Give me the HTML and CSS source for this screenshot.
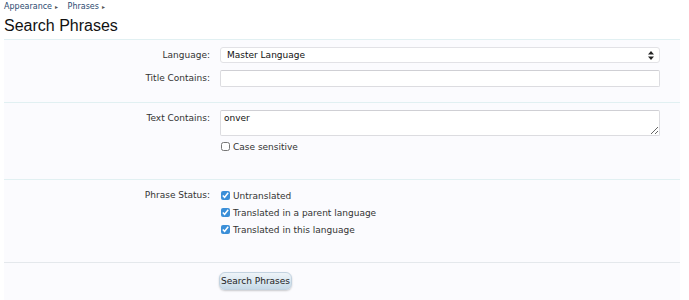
FILE: index.html
```html
<!DOCTYPE html>
<html lang="en">
<head>
  <meta charset="UTF-8">
  <title>Search Phrases</title>
  <link rel="stylesheet" href="styles.css">
</head>
<body>
  <div class="crumbs">
    <a href="#">Appearance</a><span class="arrow">&#9656;</span>
    <a href="#">Phrases</a><span class="arrow">&#9656;</span>
  </div>
  <h1>Search Phrases</h1>

  <form class="form">
    <fieldset class="section first">
      <div class="row">
        <label class="label">Language:</label>
        <div class="ctrl">
          <div class="select">
            <span>Master Language</span>
            <svg width="6" height="9" viewBox="0 0 6 9"><path d="M3 0 L6 3.5 H0 Z M3 9 L0 5.5 H6 Z" fill="#222"/></svg>
          </div>
        </div>
      </div>
      <div class="row">
        <label class="label">Title Contains:</label>
        <div class="ctrl"><input class="text" type="text"></div>
      </div>
    </fieldset>

    <fieldset class="section second">
      <div class="row">
        <label class="label">Text Contains:</label>
        <div class="ctrl">
          <textarea class="text area">onver</textarea>
          <label class="check"><input type="checkbox"> Case sensitive</label>
        </div>
      </div>
    </fieldset>

    <fieldset class="section third">
      <div class="row">
        <label class="label">Phrase Status:</label>
        <div class="ctrl">
          <label class="check"><input type="checkbox" checked> Untranslated</label>
          <label class="check"><input type="checkbox" checked> Translated in a parent language</label>
          <label class="check"><input type="checkbox" checked> Translated in this language</label>
        </div>
      </div>
    </fieldset>

    <fieldset class="section last">
      <div class="row">
        <div class="label"></div>
        <div class="ctrl"><button type="button" class="button">Search Phrases</button></div>
      </div>
    </fieldset>
  </form>
</body>
</html>
```

FILE: styles.css
```css
* {
  margin: 0;
  padding: 0;
  box-sizing: border-box;
}

body {
  background: #fff;
  font-family: "DejaVu Sans", Verdana, sans-serif;
  font-size: 9px;
  color: #222;
  padding: 0 4px;
}

.crumbs {
  height: 14px;
  padding-top: 2px;
  font-size: 8px;
  color: #2b4a70;
}

.crumbs a {
  color: #2b4a70;
  text-decoration: none;
}

.crumbs .arrow {
  font-size: 6px;
  margin: 0 7px 0 3px;
  color: #555;
}

h1 {
  font-family: "Liberation Sans", Arial, sans-serif;
  font-weight: normal;
  font-size: 16px;
  color: #111;
  height: 25px;
  line-height: 23px;
}

.form {
  width: 676px;
  background: #fbfbfe;
}

.section {
  border: none;
  border-top: 1px solid #e1f0f2;
}

.section.first { height: 63px; padding-top: 7px; }
.section.second { height: 77px; padding-top: 7px; }
.section.third { height: 83px; padding-top: 7px; }
.section.last { height: 38px; padding-top: 9px; border-top-color: #e4e8ec; }

.row {
  display: grid;
  grid-template-columns: 206px 440px;
  column-gap: 10px;
  margin-bottom: 7px;
}

.label {
  text-align: right;
  line-height: 16px;
  color: #333;
}

.ctrl {
  display: flex;
  flex-direction: column;
}

.select {
  height: 16px;
  display: flex;
  align-items: center;
  justify-content: space-between;
  padding: 0 5px 0 6px;
  background: #fff;
  border: 1px solid #e2e2e6;
  border-radius: 3px;
  color: #111;
}

.text {
  height: 17px;
  width: 100%;
  background: #fff;
  border: 1px solid #dcdce0;
  border-top-color: #cfcfd4;
  border-radius: 2px;
  font: inherit;
  padding: 0 4px;
}

.area {
  height: 26px;
  resize: vertical;
  padding: 2px 3px;
  color: #111;
  margin-bottom: 2px;
}

.check {
  display: flex;
  align-items: center;
  gap: 3px;
  height: 17px;
  color: #333;
}

.check input {
  width: 9px;
  height: 9px;
  margin: 0 0 0 1px;
  accent-color: #3b8fd8;
}

.button {
  width: 73px;
  height: 18px;
  margin-left: -1px;
  font: inherit;
  color: #222;
  background: linear-gradient(#eef4f8, #c7dae8);
  border: 1px solid #c3d3e0;
  border-radius: 6px;
  box-shadow: 0 1px 2px rgba(0, 0, 0, .2);
}
```
